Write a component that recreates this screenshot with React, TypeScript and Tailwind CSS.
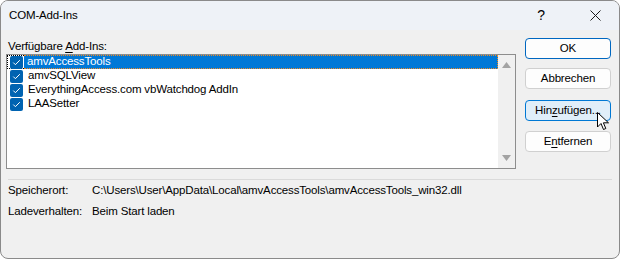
import { useState } from "react";

const addIns = [
  { id: "amvAccessTools", name: "amvAccessTools" },
  { id: "amvSQLView", name: "amvSQLView" },
  { id: "vbWatchdog", name: "EverythingAccess.com vbWatchdog AddIn" },
  { id: "LAASetter", name: "LAASetter" },
];

function CheckBox() {
  return (
    <div className="w-[13px] h-[13px] rounded-[2px] bg-[#0063b1] flex items-center justify-center shrink-0">
      <svg width="9" height="9" viewBox="0 0 9 9" fill="none">
        <path d="M1.3 4.6 L3.4 6.7 L7.8 2.2" stroke="#ffffff" strokeWidth="1" />
      </svg>
    </div>
  );
}

function DlgButton({ label, variant }: { label: React.ReactNode; variant?: "default" | "hover" }) {
  const cls =
    variant === "default"
      ? "border-[#0067c0] bg-[#fdfdfd]"
      : variant === "hover"
        ? "border-[#0078d4] bg-[#e0eef9]"
        : "border-[#d0d0d0] bg-[#fdfdfd]";
  return (
    <button className={`w-[86px] h-[21px] rounded-[4px] border ${cls} leading-none text-black flex items-center justify-center`}>
      {label}
    </button>
  );
}

export default function App() {
  const [selected] = useState("amvAccessTools");

  return (
    <div
      className="w-[620px] h-[259px] bg-white text-[11.5px] tracking-[-0.15px]"
      style={{ fontFamily: '"Liberation Sans", Arial, sans-serif' }}
    >
      <div className="relative w-full h-full rounded-[8px] border border-[#8a8a8a] overflow-hidden flex flex-col bg-[#f0f0f0]">
        {/* Title bar */}
        <div className="h-[29px] shrink-0 bg-[#eef2f7] flex items-center pl-[8px] text-black">
          <span className="flex-1">COM-Add-Ins</span>
          <span className="w-[20px] text-center text-[14px] mr-[39px]">?</span>
          <svg width="11" height="11" viewBox="0 0 11 11" className="mr-[18px]">
            <path d="M0.5 0.5 L10.5 10.5 M10.5 0.5 L0.5 10.5" stroke="#1a1a1a" strokeWidth="1" />
          </svg>
        </div>

        {/* Body */}
        <div className="flex-1 flex flex-col pt-[8px] pl-[5px] pr-[7px]">
          <div className="flex gap-[9px]">
            <div className="w-[510px] flex flex-col">
              <div className="h-[16px] pl-[2px] leading-[16px] text-black">
                Verfügbare <span className="underline underline-offset-2">A</span>dd-Ins:
              </div>
              <div className="h-[115px] border border-[#8d8d8d] bg-white flex">
                <div className="flex-1 flex flex-col">
                  {addIns.map((a) => {
                    const isSel = a.id === selected;
                    return (
                      <div key={a.id} className="h-[14px] flex items-center leading-none text-black">
                        <div
                          className={`h-[14px] pl-[2px] pr-[1px] flex items-center ${
                            isSel ? "border-y border-l border-dotted border-black" : "border border-transparent"
                          }`}
                        >
                          <CheckBox />
                        </div>
                        <div
                          className={`h-[14px] flex-1 flex items-center pl-[3px] ${
                            isSel ? "bg-[#0078d7] text-white border-y border-r border-dotted border-[#f08a24]" : ""
                          }`}
                        >
                          {a.name}
                        </div>
                      </div>
                    );
                  })}
                </div>
                {/* Scrollbar */}
                <div className="w-[17px] bg-[#f0f0f0] flex flex-col items-center justify-between py-[7px]">
                  <svg width="9" height="6" viewBox="0 0 9 6">
                    <path d="M0 6 L4.5 0 L9 6 Z" fill="#a3a3a3" />
                  </svg>
                  <svg width="9" height="6" viewBox="0 0 9 6">
                    <path d="M0 0 L4.5 6 L9 0 Z" fill="#a3a3a3" />
                  </svg>
                </div>
              </div>
            </div>

            <div className="flex flex-col">
              <DlgButton label="OK" variant="default" />
              <div className="h-[9px]" />
              <DlgButton label="Abbrechen" />
              <div className="h-[11px]" />
              <DlgButton
                label={
                  <>
                    Hin<span className="underline underline-offset-2">z</span>ufügen...
                  </>
                }
                variant="hover"
              />
              <div className="h-[10px]" />
              <DlgButton
                label={
                  <>
                    E<span className="underline underline-offset-2">n</span>tfernen
                  </>
                }
              />
            </div>
          </div>

          <div className="mt-[10px] ml-[2px] h-px bg-[#dadada]" />

          <div className="pl-[2px] text-black">
            <div className="flex h-[14px] items-center mt-[4px]">
              <span className="w-[84px]">Speicherort:</span>
              <span>C:\Users\User\AppData\Local\amvAccessTools\amvAccessTools_win32.dll</span>
            </div>
            <div className="flex h-[14px] items-center mt-[7px]">
              <span className="w-[84px]">Ladeverhalten:</span>
              <span>Beim Start laden</span>
            </div>
          </div>
        </div>

        {/* Mouse cursor */}
        <svg className="absolute left-[596px] top-[111px]" width="14" height="19" viewBox="0 0 14 19">
          <path
            d="M0.5 0.5 L0.5 15 L4 11.5 L6.5 17.5 L8.8 16.5 L6.4 10.8 L11.5 10.8 Z"
            fill="#ffffff"
            stroke="#000000"
            strokeWidth="1"
            strokeLinejoin="round"
          />
        </svg>
      </div>
    </div>
  );
}
